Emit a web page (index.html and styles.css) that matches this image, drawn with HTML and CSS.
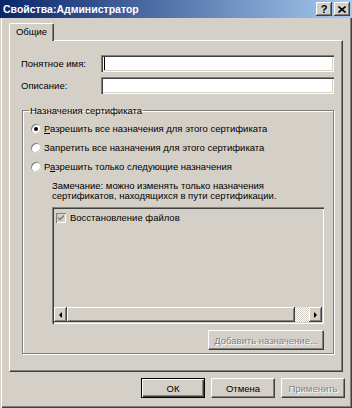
FILE: index.html
```html
<!DOCTYPE html>
<html lang="ru">
<head>
    <meta charset="UTF-8">
    <title>Свойства:Администратор</title>
    <link rel="stylesheet" href="styles.css">
</head>
<body>
<div class="window">
    <div class="titlebar">
        <span class="title">Свойства:Администратор</span>
        <div class="cap-btns">
            <span class="cap-btn help">?</span>
            <span class="cap-btn">
                <svg width="8" height="7" viewBox="0 0 8 7"><path d="M0.5 0.5 L7.5 6.5 M7.5 0.5 L0.5 6.5" stroke="#000" stroke-width="1.6"/></svg>
            </span>
        </div>
    </div>
    <div class="frame">
        <div class="tabs">
            <div class="tab">Общие</div>
        </div>
        <div class="panel">
            <div class="field">
                <label>Понятное имя:</label>
                <div class="input"><span class="caret"></span></div>
            </div>
            <div class="field">
                <label>Описание:</label>
                <div class="input"></div>
            </div>
            <fieldset class="group">
                <legend>Назначения сертификата</legend>
                <div class="radio-row first"><span class="radio checked"></span><span><u>Р</u>азрешить все назначения для этого сертификата</span></div>
                <div class="radio-row"><span class="radio"></span><span>Запретить все назначения для этого сертификата</span></div>
                <div class="radio-row"><span class="radio"></span><span>Р<u>а</u>зрешить только следующие назначения</span></div>
                <p class="note">Замечание: можно изменять только назначения<br>сертификатов, находящихся в пути сертификации.</p>
                <div class="listbox">
                    <div class="list-item">
                        <span class="checkbox">
                            <svg width="8" height="8" viewBox="0 0 8 8"><path d="M1 3.5 L3 5.5 L7 1.5" fill="none" stroke="#808080" stroke-width="1.6"/></svg>
                        </span>
                        Восстановление файлов
                    </div>
                    <div class="hscroll">
                        <span class="sb-btn"><span class="arrow left"></span></span>
                        <span class="sb-thumb"></span>
                        <span class="sb-track"></span>
                        <span class="sb-btn"><span class="arrow right"></span></span>
                    </div>
                </div>
                <div class="add-row">
                    <button class="btn add disabled"><u>Д</u>обавить назначение...</button>
                </div>
            </fieldset>
        </div>
        <div class="buttons">
            <button class="btn default">ОК</button>
            <button class="btn">Отмена</button>
            <button class="btn disabled">Применить</button>
        </div>
    </div>
</div>
</body>
</html>
```

FILE: styles.css
```css
body { margin: 0; background: #d4d0c8; }
.window { width: 352px; height: 408px; display: flex; flex-direction: column; background: #d4d0c8; font: 9.5px "Liberation Sans", Arial, sans-serif; color: #000; }

.titlebar { height: 18px; flex: none; display: flex; align-items: center; justify-content: space-between; padding: 0 2px 0 3px; background: linear-gradient(to right, #0a246a, #a6caf0); }
.title { color: #fff; font-weight: bold; font-size: 10.5px; }
.cap-btns { display: flex; gap: 2px; }
.cap-btn { width: 16px; height: 14px; box-sizing: border-box; background: #d4d0c8; display: flex; align-items: center; justify-content: center; box-shadow: inset -1px -1px #404040, inset 1px 1px #fff, inset -2px -2px #808080; }
.cap-btn.help { font-weight: bold; font-size: 11px; line-height: 14px; }

.frame { flex: 1; display: flex; flex-direction: column; padding: 5px 9px 0 9px; box-shadow: inset 1px 0 #d4d0c8, inset 2px 0 #fff, inset -1px -1px #404040, inset -2px -2px #808080; }

.tabs { display: flex; height: 17px; }
.tab { width: 45px; height: 18px; box-sizing: border-box; margin-bottom: -1px; border: 1px solid; border-color: #fff #404040 transparent #fff; border-bottom: none; border-radius: 2px 2px 0 0; box-shadow: inset -1px 0 #808080; background: #d4d0c8; display: flex; align-items: center; justify-content: center; padding-bottom: 2px; position: relative; z-index: 1; }

.panel { height: 332px; box-sizing: border-box; border: 1px solid; border-color: #fff #404040 #404040 #fff; box-shadow: inset -1px -1px #808080; padding: 14px 8px 0 11px; }

.field { display: flex; align-items: center; height: 17px; margin-bottom: 5px; }
.field label { width: 80px; flex: none; }
.input { flex: 1; height: 17px; background: #fff; display: flex; align-items: center; padding-left: 3px; box-shadow: inset 1px 1px #808080, inset 2px 2px #404040, inset -1px -1px #fff, inset -2px -2px #d4d0c8; }
.caret { width: 1px; height: 13px; background: #000; }

.group { margin: 10px 0 0 1px; padding: 0 9px 3px 8px; border: 1px solid #808080; box-shadow: 1px 1px 0 #fff, inset 1px 1px 0 #fff; }
.group legend { margin-left: -2px; padding: 0 1px; line-height: 13px; }

.radio-row { display: flex; align-items: center; gap: 3px; height: 19px; }
.radio-row.first { margin-top: 2px; }
.radio { width: 10px; height: 10px; border-radius: 50%; background: #fff; display: flex; align-items: center; justify-content: center; box-shadow: inset 1px 1px 0 #808080, inset -1px -1px 0 #d4d0c8; }
.radio.checked::after { content: ""; width: 4px; height: 4px; border-radius: 50%; background: #000; }

.note { margin: 5px 0 0 21px; line-height: 10px; }

.listbox { margin: 6px 0 0 21px; height: 117px; box-sizing: border-box; display: flex; flex-direction: column; justify-content: space-between; background: #d4d0c8; box-shadow: inset 1px 1px #808080, inset 2px 2px #404040, inset -1px -1px #fff, inset -2px -2px #d4d0c8; padding: 2px; }
.list-item { display: flex; align-items: center; gap: 4px; padding: 3px 0 0 2px; }
.checkbox { width: 10px; height: 10px; box-sizing: border-box; display: flex; align-items: center; justify-content: center; background: #d4d0c8; box-shadow: inset 1px 1px #808080, inset -1px -1px #fff; }

.hscroll { display: flex; height: 15px; }
.sb-btn, .sb-thumb { background: #d4d0c8; box-shadow: inset -1px -1px #404040, inset 1px 1px #fff, inset -2px -2px #808080; }
.sb-btn { width: 13px; display: flex; align-items: center; justify-content: center; }
.sb-thumb { flex: 1; }
.sb-track { width: 14px; background-image: conic-gradient(#fff 25%, #d4d0c8 0 50%, #fff 0 75%, #d4d0c8 0); background-size: 2px 2px; }
.arrow { width: 0; height: 0; border-top: 3px solid transparent; border-bottom: 3px solid transparent; }
.arrow.left { border-right: 3px solid #000; }
.arrow.right { border-left: 3px solid #000; }

.add-row { display: flex; justify-content: flex-end; margin-top: 6px; }

.btn { width: 64px; height: 20px; padding: 0; font: inherit; color: #000; background: #d4d0c8; border: 1px solid; border-color: #fff #404040 #404040 #fff; box-shadow: inset -1px -1px #808080; }
.btn.default { border-color: #000; box-shadow: inset 1px 1px #fff, inset -1px -1px #404040, inset -2px -2px #808080; }
.btn.disabled { color: #808080; text-shadow: 1px 1px 0 #fff; }
.btn.add { width: 116px; }

.buttons { display: flex; justify-content: flex-end; gap: 6px; margin: 6px -2px 0 0; }
```
